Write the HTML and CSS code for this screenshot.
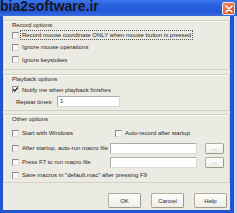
FILE: index.html
```html
<!DOCTYPE html>
<html>
<head>
<meta charset="utf-8">
<link rel="stylesheet" href="styles.css">
</head>
<body>
<div class="window">
  <div class="titlebar">
    <span class="watermark">bia2software.ir</span>
    <span class="close">
      <svg width="8" height="8" viewBox="0 0 8 8"><path d="M1 1L7 7M7 1L1 7" stroke="#fff" stroke-width="1.6" stroke-linecap="round"/></svg>
    </span>
  </div>
  <div class="client">
    <div class="group g1">
      <div class="legend">Record options</div>
      <div class="row r12"><span class="cb"></span><span class="txt focus">Record mouse coordinate ONLY when mouse button is pressed</span></div>
      <div class="row r12"><span class="cb"></span><span class="txt">Ignore mouse operations</span></div>
      <div class="row r13"><span class="cb"></span><span class="txt">Ignore keystokes</span></div>
    </div>
    <div class="group g2">
      <div class="legend">Playback options</div>
      <div class="row r13"><span class="cb checked"><svg width="7" height="7" viewBox="0 0 7 7"><path d="M1 3.2L2.8 5L6 1.6" stroke="#1e2a20" stroke-width="1.4" fill="none"/></svg></span><span class="txt">Notify me when playback finishes</span></div>
      <div class="row r11"><span class="lbl">Repeat times:</span><span class="input repeat">1</span></div>
    </div>
    <div class="group g3">
      <div class="legend">Other options</div>
      <div class="row r12 first">
        <span class="cell"><span class="cb"></span><span class="txt">Start with Windows</span></span>
        <span class="cb"></span><span class="txt">Auto-record after startup</span>
      </div>
      <div class="row r14 second">
        <span class="cell2"><span class="cb"></span><span class="txt">After startup, auto-run macro file</span></span>
        <span class="input path"></span><span class="btn small">...</span>
      </div>
      <div class="row r14">
        <span class="cell2"><span class="cb"></span><span class="txt">Press F7 to run macro file</span></span>
        <span class="input path"></span><span class="btn small">...</span>
      </div>
      <div class="row r12"><span class="cb"></span><span class="txt">Save macros in "default.mac" after pressing F9</span></div>
    </div>
    <div class="buttons">
      <span class="btn">OK</span>
      <span class="btn">Cancel</span>
      <span class="btn">Help</span>
    </div>
  </div>
</div>
</body>
</html>
```
FILE: styles.css
```css
html, body {
  margin: 0;
  padding: 0;
}
body {
  width: 237px;
  height: 213px;
  overflow: hidden;
  font-family: "Liberation Sans", Arial, sans-serif;
  font-size: 6px;
  color: #1f1f1f;
}
.window {
  width: 237px;
  height: 213px;
  background: #2455d0;
  box-shadow: inset -3px 0 0 #c9d2ea;
  display: flex;
  flex-direction: column;
  box-sizing: border-box;
}
.titlebar {
  position: relative;
  height: 16px;
  flex: none;
  background: linear-gradient(#3b78ec 0, #2a62e0 30%, #2459d8 75%, #3a6ee0 100%);
}
.watermark {
  position: absolute;
  left: 0;
  top: 0;
  font-size: 14px;
  line-height: 12px;
  font-weight: bold;
  color: #16171c;
  white-space: nowrap;
}
.close {
  position: absolute;
  left: 222px;
  top: 2px;
  width: 11px;
  height: 11px;
  border: 1px solid #f4e6de;
  border-radius: 2px;
  background: linear-gradient(135deg, #f08a62, #d9481e);
  display: flex;
  align-items: center;
  justify-content: center;
}
.client {
  flex: 1;
  margin: 0 7px 3px 3px;
  background: #ecebe3;
  padding: 4px 0 2px 0;
  display: flex;
  flex-direction: column;
}
.group {
  border: 1px solid #d3d1c4;
  box-shadow: inset 1px 1px 0 #fbfbf8;
  padding: 1px 0 3px 8px;
}
.g2 {
  margin-top: 4px;
}
.g3 {
  margin-top: 3px;
  padding-bottom: 1px;
}
.legend {
  height: 7px;
  line-height: 7px;
  white-space: nowrap;
}
.row {
  display: flex;
  align-items: center;
  white-space: nowrap;
}
.r11 { height: 11px; }
.r12 { height: 12px; }
.r13 { height: 13px; }
.r14 { height: 14px; }
.first { margin-top: 4px; }
.second { margin-top: 2px; }
.cb {
  width: 5px;
  height: 5px;
  flex: none;
  border: 1px solid;
  border-color: #8c8c86 #dcdcd4 #dcdcd4 #8c8c86;
  background: #f7f7f3;
  display: flex;
  align-items: center;
  justify-content: center;
  overflow: hidden;
}
.cb svg { flex: none; }
.txt {
  margin-left: 2px;
  line-height: 8px;
  padding: 0 1px;
}
.focus {
  outline: 1px dotted #555;
  outline-offset: 0;
}
.cell {
  display: flex;
  align-items: center;
  width: 103px;
}
.cell2 {
  display: flex;
  align-items: center;
  width: 98px;
}
.lbl {
  width: 41px;
  margin-left: 4px;
}
.input {
  box-sizing: border-box;
  height: 11px;
  background: #fff;
  border: 1px solid;
  border-color: #a9acb0 #dcdcd6 #dcdcd6 #a9acb0;
  line-height: 9px;
  padding-left: 2px;
}
.repeat { width: 63px; }
.path { width: 87px; }
.btn {
  box-sizing: border-box;
  display: flex;
  align-items: center;
  justify-content: center;
  width: 33px;
  height: 15px;
  border: 1px solid #b0ad9e;
  border-right-color: #9c9988;
  border-bottom-color: #9c9988;
  border-radius: 2px;
  background: linear-gradient(#fdfdfb, #efeee8);
}
.btn.small {
  width: 19px;
  height: 11px;
  margin-left: 8px;
  line-height: 6px;
  color: #666;
}
.buttons {
  margin-top: 10px;
  display: flex;
  justify-content: flex-end;
  gap: 10px;
  padding-right: 3px;
}
```
